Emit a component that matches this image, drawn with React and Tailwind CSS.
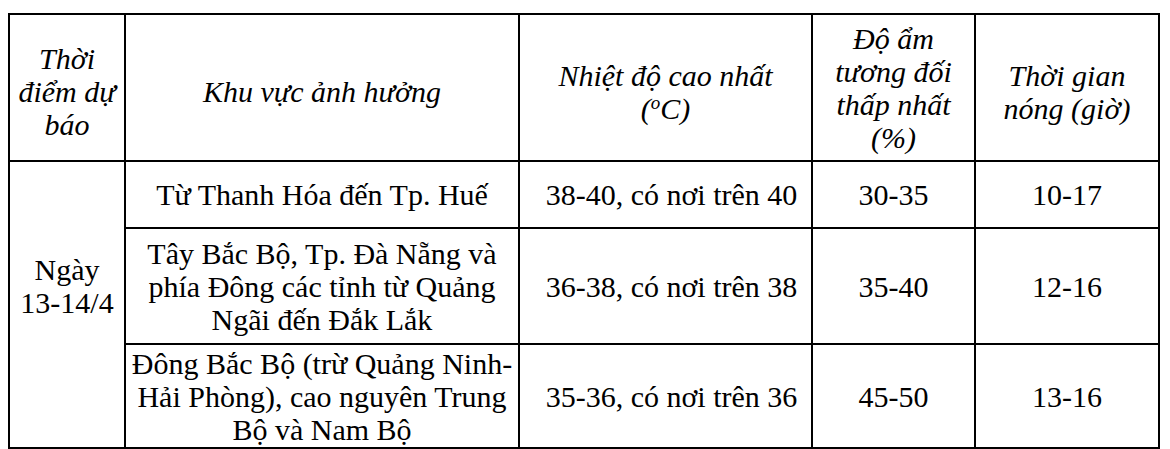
/**
 * Heat forecast table
 */

const HEAD = "border-2 border-black italic font-normal text-center align-middle leading-[33px] px-1";
const CELL = "border-2 border-black text-center align-middle leading-[33px]";

const ROWS = [
  {
    area: ["Từ Thanh Hóa đến Tp. Huế"],
    temp: "38-40, có nơi trên 40",
    humidity: "30-35",
    hours: "10-17",
    height: "h-[67px]",
  },
  {
    area: ["Tây Bắc Bộ, Tp. Đà Nẵng và", "phía Đông các tỉnh từ Quảng", "Ngãi đến Đắk Lắk"],
    temp: "36-38, có nơi trên 38",
    humidity: "35-40",
    hours: "12-16",
    height: "h-[116px]",
  },
  {
    area: ["Đông Bắc Bộ (trừ Quảng Ninh-", "Hải Phòng), cao nguyên Trung", "Bộ và Nam Bộ"],
    temp: "35-36, có nơi trên 36",
    humidity: "45-50",
    hours: "13-16",
    height: "h-[104px]",
  },
];

function Lines({ items }) {
  return items.map((line, i) => (
    <div key={i} className="whitespace-nowrap">
      {line}
    </div>
  ));
}

export default function App() {
  return (
    <div className="w-[1170px] h-[449px] bg-white text-black pt-[13px] pl-[8px] font-['Liberation_Serif','Times_New_Roman',serif]">
      <table className="table-fixed border-collapse text-[30px]">
        <colgroup>
          <col className="w-[116px]" />
          <col className="w-[394px]" />
          <col className="w-[293px]" />
          <col className="w-[163px]" />
          <col className="w-[184px]" />
        </colgroup>
        <thead>
          <tr>
            <th className={`${HEAD} h-[147px] pt-[7px]`}>
              <Lines items={["Thời", "điểm dự", "báo"]} />
            </th>
            <th className={`${HEAD} pt-2`}>Khu vực ảnh hưởng</th>
            <th className={`${HEAD} pt-2`}>
              <div>Nhiệt độ cao nhất</div>
              <div>
                (<sup className="text-[19px]">o</sup>C)
              </div>
            </th>
            <th className={HEAD}>
              <Lines items={["Độ ẩm", "tương đối", "thấp nhất", "(%)"]} />
            </th>
            <th className={`${HEAD} pt-2`}>
              <Lines items={["Thời gian", "nóng (giờ)"]} />
            </th>
          </tr>
        </thead>
        <tbody>
          {ROWS.map((row, i) => (
            <tr key={i}>
              {i === 0 && (
                <td rowSpan={3} className={`${CELL} pb-[38px]`}>
                  <div>Ngày</div>
                  <div>13-14/4</div>
                </td>
              )}
              <td className={`${CELL} ${row.height} px-1`}>
                <Lines items={row.area} />
              </td>
              <td className={`${CELL} pl-3`}>{row.temp}</td>
              <td className={CELL}>{row.humidity}</td>
              <td className={CELL}>{row.hours}</td>
            </tr>
          ))}
        </tbody>
      </table>
    </div>
  );
}
